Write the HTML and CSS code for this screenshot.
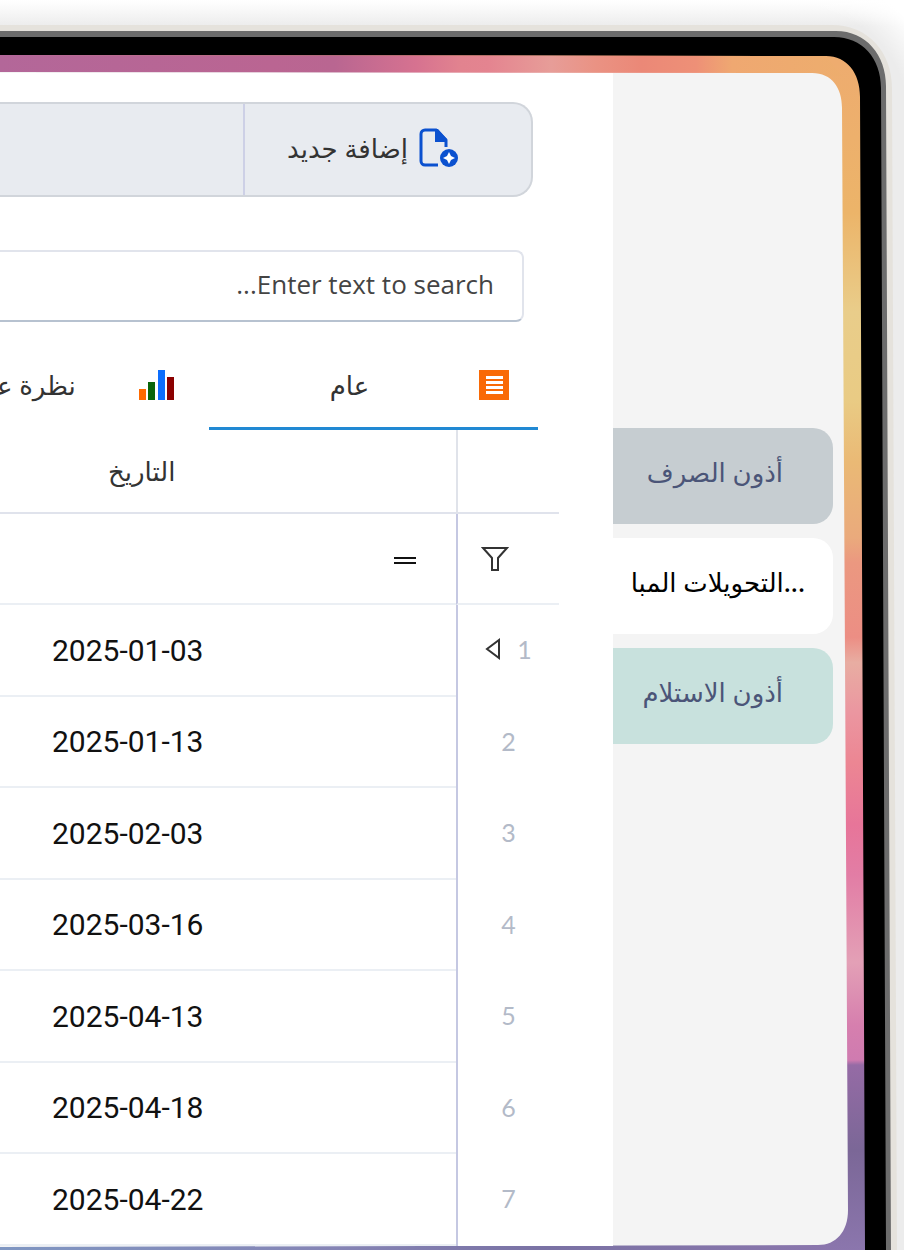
FILE: index.html
```html
<!DOCTYPE html>
<html lang="ar" dir="rtl">

<head>
    <meta charset="UTF-8">
    <meta name="viewport" content="width=device-width, initial-scale=1.0">
    <title>التحويلات</title>

    <link rel="stylesheet" href="styles.css">
</head>

<body>
    <!-- tablet frame -->
    <svg class="frame" viewBox="0 0 904 1250" preserveAspectRatio="none" aria-hidden="true">
        <defs>
            <linearGradient id="halo" x1="0" y1="0" x2="0" y2="26" gradientUnits="userSpaceOnUse">
                <stop offset="0" stop-color="#ffffff"/>
                <stop offset="0.3" stop-color="#fafafa"/>
                <stop offset="1" stop-color="#ececec"/>
            </linearGradient>
            <radialGradient id="corner" cx="804" cy="112" r="146" gradientUnits="userSpaceOnUse">
                <stop offset="0.7" stop-color="#ffffff" stop-opacity="0"/>
                <stop offset="0.95" stop-color="#ffffff"/>
            </radialGradient>
            <linearGradient id="top" x1="0" y1="0" x2="904" y2="0" gradientUnits="userSpaceOnUse">
                <stop offset="0" stop-color="#b36799"/>
                <stop offset="0.3" stop-color="#ba6592"/>
                <stop offset="0.37" stop-color="#b96691"/>
                <stop offset="0.46" stop-color="#d67290"/>
                <stop offset="0.51" stop-color="#e2838f"/>
                <stop offset="0.54" stop-color="#e48490"/>
                <stop offset="0.61" stop-color="#e79d98"/>
                <stop offset="0.66" stop-color="#ea9283"/>
                <stop offset="0.71" stop-color="#eb8877"/>
                <stop offset="0.77" stop-color="#ee9077"/>
                <stop offset="0.81" stop-color="#efa871"/>
                <stop offset="1" stop-color="#ecb06b"/>
            </linearGradient>
            <linearGradient id="side" x1="840" y1="0" x2="860" y2="1250" gradientUnits="userSpaceOnUse">
                <stop offset="0.05" stop-color="#eeac6f"/>
                <stop offset="0.17" stop-color="#ecb469"/>
                <stop offset="0.25" stop-color="#e9cd8a"/>
                <stop offset="0.32" stop-color="#e9cb84"/>
                <stop offset="0.37" stop-color="#eab975"/>
                <stop offset="0.43" stop-color="#eaaa7c"/>
                <stop offset="0.45" stop-color="#eb9880"/>
                <stop offset="0.51" stop-color="#ec8e84"/>
                <stop offset="0.53" stop-color="#e8ada2"/>
                <stop offset="0.57" stop-color="#eb96a0"/>
                <stop offset="0.61" stop-color="#ec8693"/>
                <stop offset="0.66" stop-color="#e77599"/>
                <stop offset="0.7" stop-color="#e27da5"/>
                <stop offset="0.77" stop-color="#e3a0b6"/>
                <stop offset="0.82" stop-color="#d67fae"/>
                <stop offset="0.848" stop-color="#cf7bb0"/>
                <stop offset="0.852" stop-color="#956ba5"/>
                <stop offset="0.92" stop-color="#7b6797"/>
                <stop offset="1" stop-color="#8b76ad"/>
            </linearGradient>
            <linearGradient id="bottom" x1="0" y1="0" x2="840" y2="0" gradientUnits="userSpaceOnUse">
                <stop offset="0" stop-color="#7f96c2"/>
                <stop offset="0.4" stop-color="#8584b5"/>
                <stop offset="0.65" stop-color="#7a72a4"/>
                <stop offset="1" stop-color="#8b76ad"/>
            </linearGradient>
        </defs>
        <rect width="904" height="1250" fill="#ececec"/>
        <rect width="904" height="26" fill="url(#halo)"/>
        <rect x="804" width="100" height="112" fill="url(#corner)"/>
        <path d="M0 25H832C868 25 892 52 892 88L897 1250H0Z" fill="#e5e2dc"/>
        <path d="M0 31H836C866 31 886 55 886 86L891 1250H0Z" fill="#6c6c6c"/>
        <path d="M0 37H834C862 37 881 58 881 88L886 1250H0Z" fill="#000"/>
        <path d="M0 55L826 56C847 56 860 73 860 97L865 1250H0Z" fill="url(#side)"/>
        <path d="M0 55L826 56L842 76H0Z" fill="url(#top)"/>
        <path d="M0 1240H830V1250H0Z" fill="url(#bottom)"/>
        <path d="M0 72L812 73C832 73 842 88 842 108L848 1210C848 1232 836 1245 818 1245L0 1247Z" fill="#f4f4f4"/>
    </svg>

    <div class="app">
        <!-- side tabs -->
        <nav class="side">
            <button class="side-tab side-grey">أذون الصرف</button>
            <button class="side-tab side-active" dir="ltr">التحويلات المبا...</button>
            <button class="side-tab side-green">أذون الاستلام</button>
        </nav>

        <main class="main">
            <div class="toolbar">
                <button class="add-btn">
                    <svg width="40" height="40" viewBox="0 0 40 40" aria-hidden="true">
                        <path d="M20 37H7a4 4 0 0 1-4-4V6a4 4 0 0 1 4-4H18L28 12V19" fill="none" stroke="#0b51cf" stroke-width="3"/>
                        <path d="M17 1H20L29 11V14H17Z" fill="#0b51cf"/>
                        <circle cx="31" cy="30" r="9" fill="#0b51cf"/>
                        <path d="M31 24L33 28L37 30L33 32L31 36L29 32L25 30L29 28Z" fill="#fff"/>
                    </svg>
                    <span>إضافة جديد</span>
                </button>
            </div>

            <input class="search" type="text" placeholder="Enter text to search..." aria-label="Enter text to search">

            <div class="tabs">
                <button class="tab tab-active">
                    <svg width="32" height="32" viewBox="0 0 32 32" aria-hidden="true">
                        <rect x="1" y="1" width="30" height="30" fill="#f96a06"/>
                        <path d="M8 8.500H25M8 13.500H25M8 18.500H25M8 23.500H25" stroke="#fff" stroke-width="3"/>
                    </svg>
                    <span>عام</span>
                </button>
                <button class="tab">
                    <svg width="36" height="32" viewBox="0 0 36 32" aria-hidden="true">
                        <rect x="0" y="20" width="7" height="11" fill="#ff6a00"/>
                        <rect x="9" y="13" width="7" height="18" fill="#0a650a"/>
                        <rect x="19" y="1" width="7" height="30" fill="#0d6efd"/>
                        <rect x="28" y="8" width="7" height="23" fill="#8b0000"/>
                    </svg>
                    <span>نظرة عامة</span>
                </button>
            </div>

            <table class="grid">
                <thead>
                    <tr>
                        <th class="num"></th>
                        <th class="date">التاريخ</th>
                    </tr>
                </thead>
                <tbody>
                    <tr class="filter">
                        <td class="num">
                            <svg width="28" height="26" viewBox="0 0 28 26" aria-hidden="true">
                                <path d="M2 2H26L17 12V24H11V12Z" fill="none" stroke="#333" stroke-width="2"/>
                            </svg>
                        </td>
                        <td class="date">
                            <svg width="22" height="10" viewBox="0 0 22 10" aria-hidden="true">
                                <path d="M0 2H22M0 7H22" stroke="#111" stroke-width="2"/>
                            </svg>
                        </td>
                    </tr>
                    <tr>
                        <td class="num">
                            <span class="current">1
                                <svg width="16" height="24" viewBox="0 0 16 24" aria-hidden="true">
                                    <path d="M14 3V21L2 12Z" fill="none" stroke="#333" stroke-width="2"/>
                                </svg>
                            </span>
                        </td>
                        <td class="date">2025-01-03</td>
                    </tr>
                    <tr><td class="num">2</td><td class="date">2025-01-13</td></tr>
                    <tr><td class="num">3</td><td class="date">2025-02-03</td></tr>
                    <tr><td class="num">4</td><td class="date">2025-03-16</td></tr>
                    <tr><td class="num">5</td><td class="date">2025-04-13</td></tr>
                    <tr><td class="num">6</td><td class="date">2025-04-18</td></tr>
                    <tr><td class="num">7</td><td class="date">2025-04-22</td></tr>
                </tbody>
            </table>
        </main>
    </div>
</body>

</html>
```
FILE: styles.css
```css
* {
    box-sizing: border-box;
}

body {
    margin: 0;
    min-height: 100vh;
    position: relative;
    overflow: hidden;
    font-family: "Noto Sans", "DejaVu Sans", sans-serif;
    font-size: 26px;
    color: #333;
}

button {
    font: inherit;
    color: inherit;
    border: none;
    background: none;
    padding: 0;
    cursor: pointer;
}

/* frame sits behind the app */
.frame {
    position: absolute;
    inset: 0;
    width: 100%;
    height: 100%;
    z-index: -1;
}

.app {
    display: flex;
    padding: 73px 71px 0 0;
}

.side {
    flex: none;
    width: 220px;
    padding-top: 355px;
    display: flex;
    flex-direction: column;
    gap: 14px;
}

.side-tab {
    height: 96px;
    padding: 0 50px 8px 0;
    text-align: right;
    white-space: nowrap;
    border-radius: 0 20px 20px 0;
    color: #4b5578;
}

.side-grey {
    background-color: #c6cdd1;
}

.side-active {
    background-color: #fff;
    color: #000;
    font-weight: 500;
    padding-right: 28px;
}

.side-green {
    background-color: #c8e1dd;
}

.main {
    flex: 1;
    min-width: 0;
    overflow: hidden;
    background-color: #fff;
    padding-top: 29px;
}

.toolbar {
    display: flex;
    height: 95px;
    margin-right: 80px;
    background-color: #e8ebf0;
    border: 2px solid #d1d5db;
    border-left: none;
    border-radius: 0 20px 20px 0;
}

.add-btn {
    display: flex;
    align-items: center;
    gap: 10px;
    width: 288px;
    padding: 0 73px 4px 0;
    border-left: 2px solid #cdd0e6;
}

.search {
    display: block;
    width: calc(100% - 89px);
    height: 72px;
    margin: 53px 89px 0 0;
    padding: 0 28px 4px;
    font-family: "Open Sans", sans-serif;
    font-size: 26px;
    border: 2px solid #e1e4ec;
    border-bottom-color: #b7c2d0;
    border-left: none;
    border-radius: 0 8px 8px 0;
}

.search::placeholder {
    color: #444;
    opacity: 1;
}

.tabs {
    display: flex;
    height: 84px;
    margin: 24px 75px 0 0;
}

.tab {
    flex: none;
    display: flex;
    align-items: center;
    width: 329px;
    padding: 0 28px 6px 12px;
}

.tab span {
    flex: 1;
}

.tab + .tab {
    padding: 0 34px 6px 18px;
}

.tab-active {
    border-bottom: 3px solid #2189d3;
    padding-bottom: 3px;
}

.grid {
    width: calc(100% - 54px);
    margin-right: 54px;
    border-collapse: separate;
    border-spacing: 0;
    table-layout: fixed;
}

th,
td {
    height: 91px;
    padding: 0;
    font-weight: normal;
}

th {
    height: 84px;
    border-bottom: 2px solid #e0e3ec;
}

tr:nth-child(even) td {
    height: 92px;
}

.filter .num,
.date {
    border-bottom: 2px solid #ebeff4;
}

th.date {
    border-bottom-color: #e0e3ec;
}

.num {
    width: 103px;
    padding-bottom: 4px;
    border-left: 2px solid #c5c8e2;
    font-family: Lato, sans-serif;
    font-size: 25px;
    color: #b3bac8;
    text-align: center;
}

th.num {
    border-left-color: #e0e3ea;
}

.filter .num {
    padding-right: 0;
    padding-left: 0;
    padding-right: 28px;
    text-align: center;
}

.current {
    display: flex;
    align-items: center;
    justify-content: center;
    gap: 16px;
}

.date {
    padding-left: 52px;
    font-family: Roboto, sans-serif;
    font-size: 30px;
    color: #111;
    text-align: left;
}

th.date {
    padding-left: 108px;
    font-family: "Noto Sans", "DejaVu Sans", sans-serif;
    font-size: 26px;
    color: #333;
}

.filter .date {
    padding-right: 40px;
    text-align: right;
}

svg {
    flex: none;
    vertical-align: middle;
}
```
